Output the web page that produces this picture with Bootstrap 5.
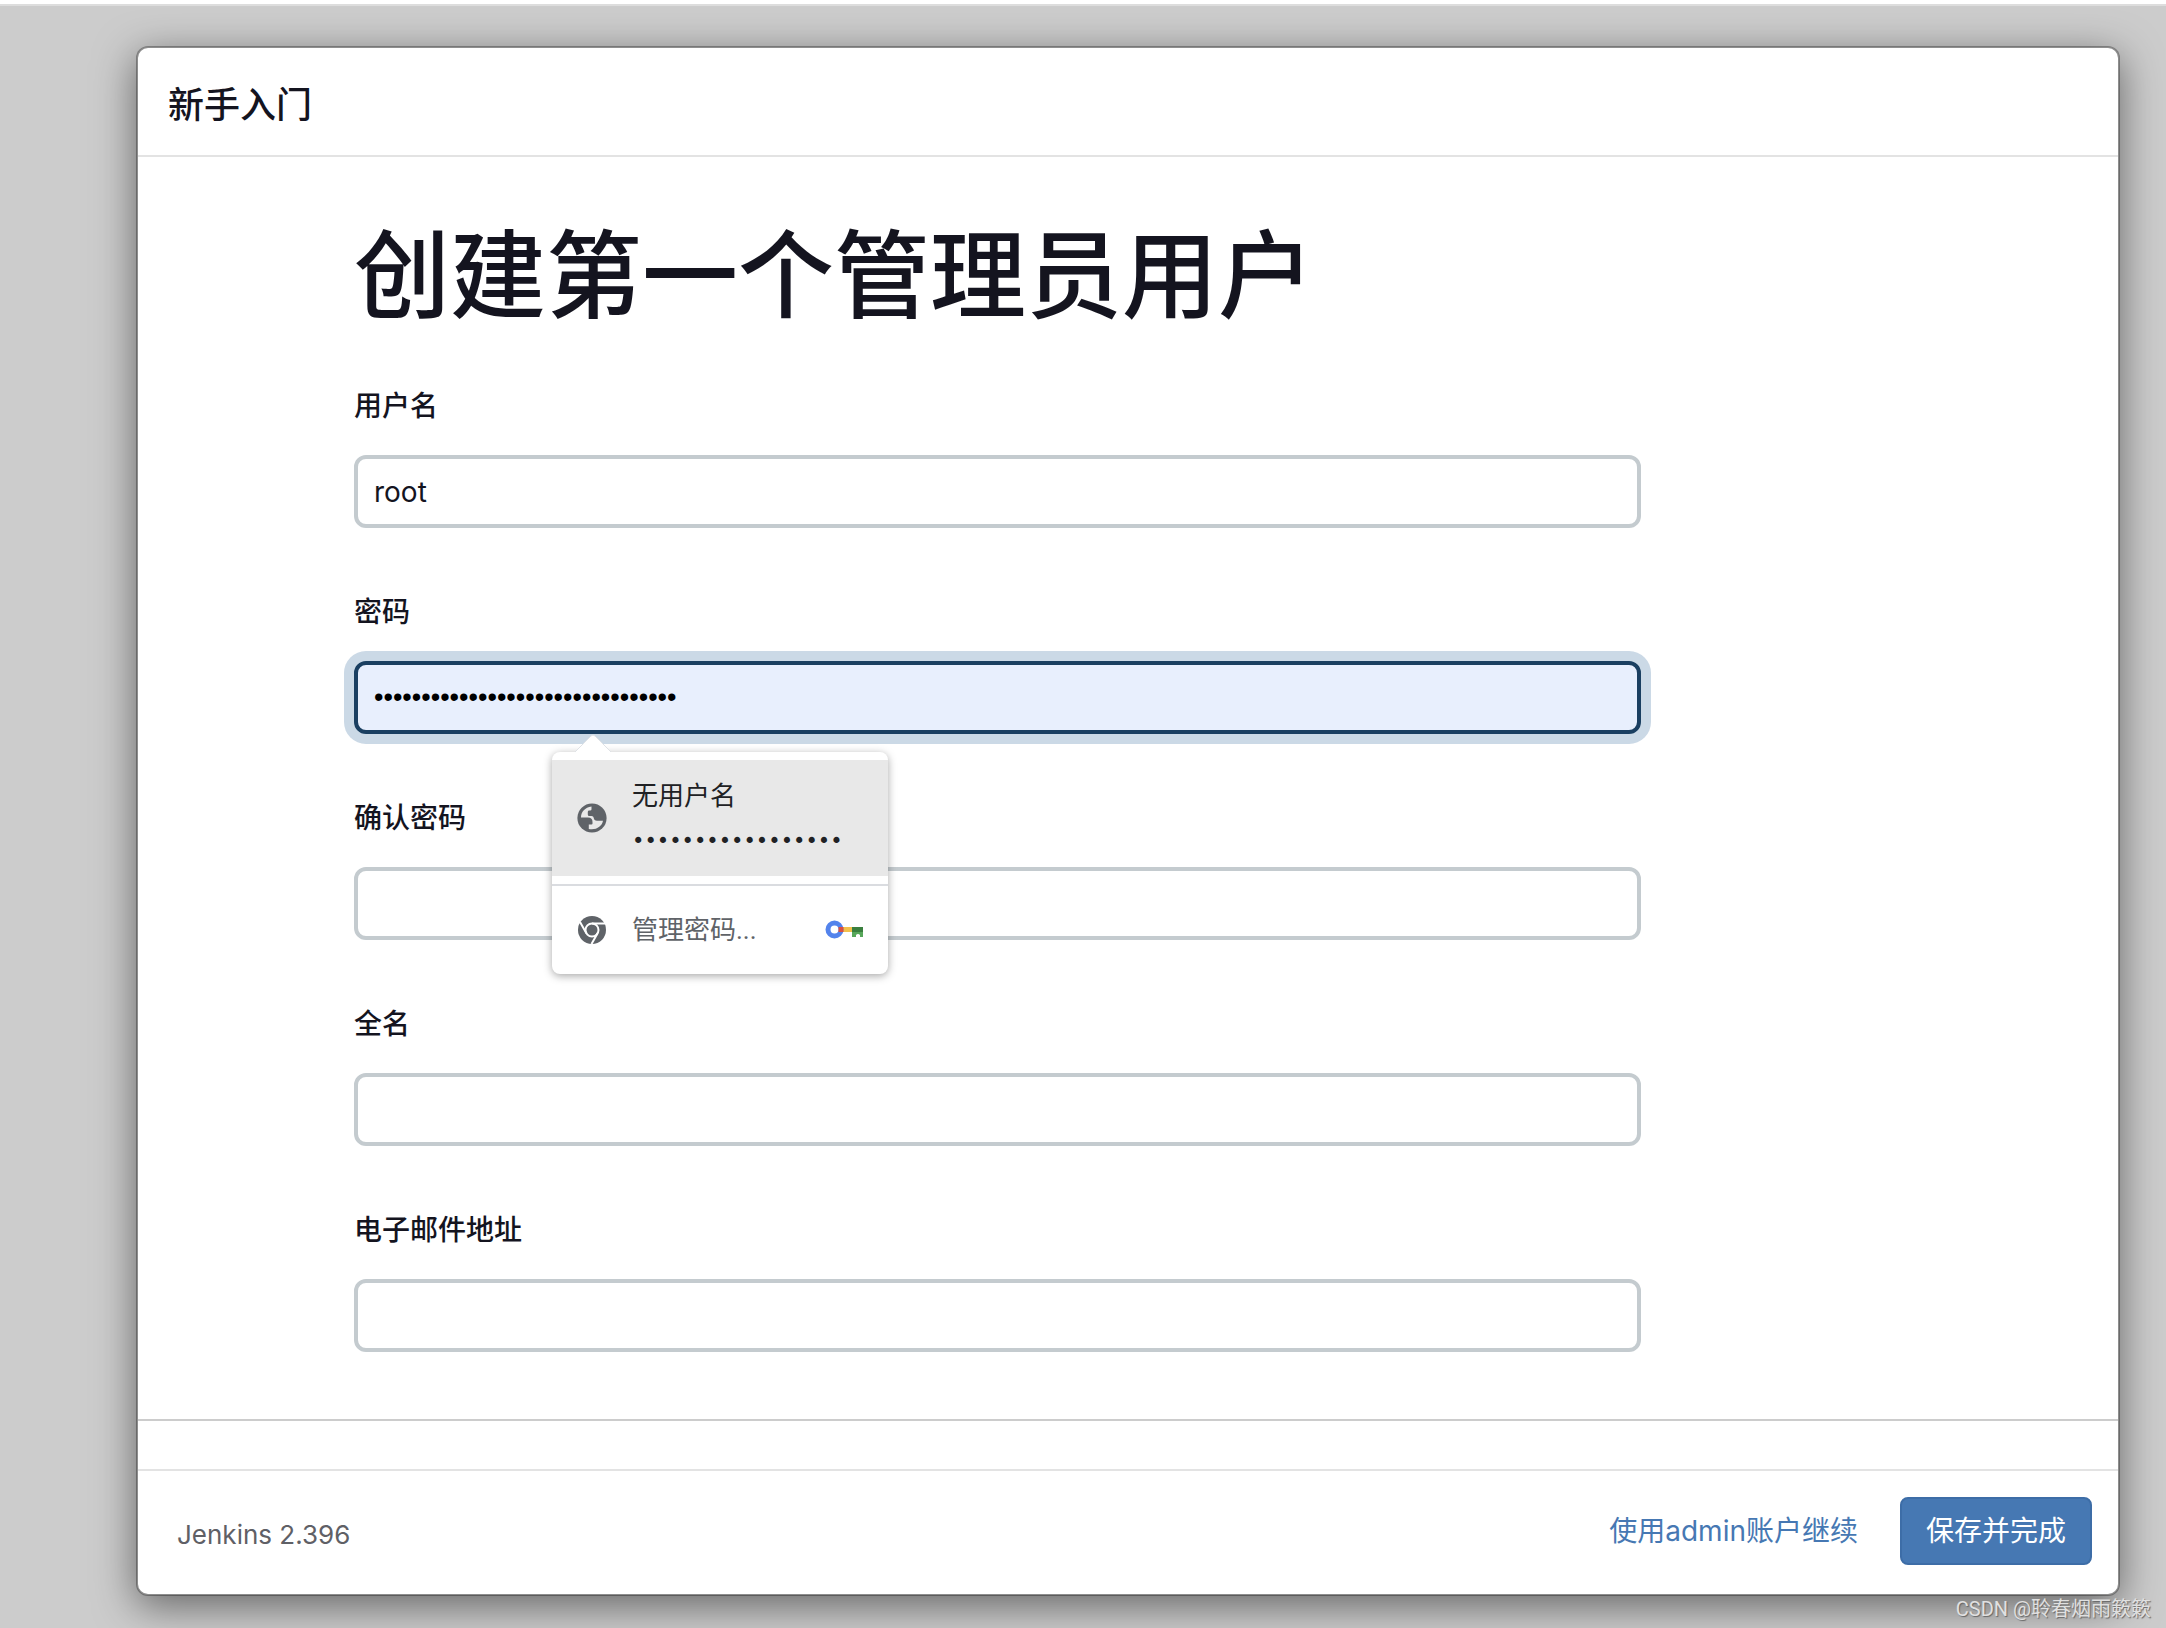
<!DOCTYPE html>
<html lang="zh-CN">
<head>
<meta charset="utf-8">
<meta name="viewport" content="width=device-width, initial-scale=1">
<title>新手入门 - Jenkins</title>
<link href="https://cdn.jsdelivr.net/npm/bootstrap@5.3.0/dist/css/bootstrap.min.css" rel="stylesheet">
<style>
  body {
    background: #ccc;
    color: #14141f;
    font-family: Inter, "Noto Sans CJK SC", sans-serif;
    font-size: 28px;
    line-height: 42px;
  }
  .page-shell {
    border-top: 4px solid #fff;
    padding: 42px 46px 32px 136px;
    box-shadow: inset 0 2px 0 #ddd;
  }
  .wizard {
    background: #fff;
    background-clip: padding-box;
    border: 2px solid rgba(0, 0, 0, .3);
    border-radius: 12px;
    box-shadow: 0 10px 40px rgba(0, 0, 0, .5);
  }
  .wizard-head { padding: 30px 30px 23px; border-bottom: 2px solid #e3e3e3; }
  .wizard-title { font-size: 36px; line-height: 54px; font-weight: 500; }
  .wizard-body { padding: 62px 0 67px 216px; border-bottom: 2px solid #ccc; }
  .form-heading { font-size: 96px; line-height: 112px; font-weight: 500; margin-bottom: 54px; }
  .admin-form { width: calc((100% + 216px) * .65); }
  .field-group + .field-group { margin-top: 63px; }
  .field-group .form-label { display: block; margin-bottom: 28px; font-weight: 500; }
  .field-group .form-control {
    height: 73px;
    padding: 0 16px;
    border: 4px solid #c4cbcf;
    border-radius: 12px;
    color: #14141f;
    font-size: 28px;
    line-height: 42px;
  }
  .field-group .form-control.is-focused {
    background: #e8effd;
    border-color: #1a3f61;
    box-shadow: 0 0 0 10px #cbd9e6;
    color: #000;
    font-family: "Liberation Sans", sans-serif;
    font-size: 27px;
  }
  .autofill {
    top: 91px;
    left: 198px;
    width: 336px;
    padding: 8px 0 0;
    border: 0;
    border-radius: 8px;
    box-shadow: 0 2px 8px rgba(0, 0, 0, .35);
    font-family: Roboto, "Noto Sans CJK SC", sans-serif;
    font-size: 26px;
  }
  .autofill-arrow { top: -18px; left: 22px; width: 38px; height: 20px; }
  .autofill .dropdown-item { padding: 0 24px 0 23px; gap: 23px; line-height: 40px; color: #202124; }
  .autofill .saved-login { height: 116px; padding-top: 6px; background: #e8e8e8; }
  .autofill .saved-login .item-icon { margin-bottom: 6px; }
  .autofill .manage-row { height: 88px; color: #5f6368; }
  .autofill .dropdown-divider { margin: 8px 0 0; border-top: 2px solid #dadce0; opacity: 1; }
  .autofill .item-icon { width: 34px; height: 34px; flex: none; }
  .masked { font-family: "DejaVu Sans", sans-serif; font-size: 21px; line-height: 50px; }
  .key-icon { width: 38px; height: 20px; margin-right: 1px; }
  .footer-gap { height: 50px; border-bottom: 2px solid #e3e3e3; }
  .wizard-foot { height: 123px; padding: 26px 26px 0 39px; }
  .version-text { color: #5f6066; font-size: 26px; line-height: 76px; }
  .skip-link { color: #4678b3; text-decoration: none; }
  .btn-save {
    height: 68px;
    padding: 0 24px;
    border: 2px solid #3d6da7;
    border-radius: 8px;
    background: #4678b3;
    color: #fff;
    font-size: 28px;
    line-height: 42px;
  }
  .foot-actions { gap: 42px; height: 68px; }
  .watermark {
    right: 15px;
    bottom: 4px;
    color: #e0e0e0;
    font-family: Roboto, "Noto Sans CJK SC", sans-serif;
    font-size: 20px;
    line-height: 30px;
    text-shadow: 1px 1px 1px #666;
  }
</style>
</head>
<body>
<div class="page-shell position-relative">
  <main class="wizard">
    <header class="wizard-head">
      <h4 class="wizard-title mb-0">新手入门</h4>
    </header>
    <section class="wizard-body">
      <h1 class="form-heading">创建第一个管理员用户</h1>
      <form class="admin-form" id="admin-form">
        <div class="field-group">
          <label class="form-label" for="username">用户名</label>
          <input class="form-control" id="username" type="text" value="root">
        </div>
        <div class="field-group">
          <label class="form-label" for="password">密码</label>
          <div class="position-relative">
            <input class="form-control is-focused" id="password" type="password" value="0123456789abcdef0123456789abcdef">
            <div class="dropdown-menu show autofill">
              <svg class="autofill-arrow position-absolute" viewBox="0 0 38 20" aria-hidden="true"><path d="M1 18 17 2q2-2 4 0l16 16" fill="#fff" stroke="#dfe2e6"/><path d="M2 18h34v2H2z" fill="#fff"/></svg>
              <button type="button" class="dropdown-item saved-login d-flex align-items-center">
                <svg class="item-icon" viewBox="0 0 34 34" aria-hidden="true"><circle cx="17" cy="17" r="14.600" fill="#5f6368"/><path d="M16.500 5.500C10 6.500 6 11 6 16.500h7q4.500 0 4.500 4.500v1.500q0 1-1 1h-2.700V28C21 29.500 27 25.500 28 19.800h-6q-3 0-3.300-3-.2-1.800-2.200-1.800h-2.300q-1.400 0-1.400-1.500V11q0-1.400 1.400-1.400h1q1.300 0 1.300-1.400z" fill="#e8e8e8"/></svg>
                <span class="d-flex flex-column"><span>无用户名</span><span class="masked">•••••••••••••••••</span></span>
              </button>
              <hr class="dropdown-divider">
              <button type="button" class="dropdown-item manage-row d-flex align-items-center">
                <svg class="item-icon" viewBox="0 0 34 34" aria-hidden="true"><circle cx="17" cy="17" r="14" fill="#5f6368"/><circle cx="17" cy="17" r="6.500" fill="none" stroke="#fff" stroke-width="2"/><path d="M17 10.500h13M11.400 20.200 5 9M22.600 20.200 16.500 31" fill="none" stroke="#fff" stroke-width="2"/></svg>
                <span>管理密码...</span>
                <svg class="key-icon ms-auto" viewBox="0 0 38 20" aria-hidden="true"><path d="M14 7h14v5H14z" fill="#f3c14b"/><path d="M27 7h11v5H27z" fill="#3a7f3f"/><path d="M27 12h11v5h-3v-2q-2-2-4 0v2h-4z" fill="#57a75a"/><circle cx="9.500" cy="9.500" r="6.500" fill="none" stroke="#5383ec" stroke-width="5"/><path d="M13.500 7H18.500v5H13.500z" fill="#d95040"/></svg>
              </button>
            </div>
          </div>
        </div>
        <div class="field-group">
          <label class="form-label" for="confirm">确认密码</label>
          <input class="form-control" id="confirm" type="password">
        </div>
        <div class="field-group">
          <label class="form-label" for="fullname">全名</label>
          <input class="form-control" id="fullname" type="text">
        </div>
        <div class="field-group">
          <label class="form-label" for="email">电子邮件地址</label>
          <input class="form-control" id="email" type="text">
        </div>
      </form>
    </section>
    <div class="footer-gap"></div>
    <footer class="wizard-foot d-flex justify-content-between align-items-start">
      <span class="version-text">Jenkins 2.396</span>
      <div class="foot-actions d-flex align-items-center">
        <a class="skip-link" href="#">使用admin账户继续</a>
        <button type="submit" form="admin-form" class="btn btn-save">保存并完成</button>
      </div>
    </footer>
  </main>
  <div class="watermark position-absolute">CSDN @聆春烟雨簌簌</div>
</div>
<script src="https://cdn.jsdelivr.net/npm/bootstrap@5.3.0/dist/js/bootstrap.bundle.min.js"></script>
</body>
</html>
